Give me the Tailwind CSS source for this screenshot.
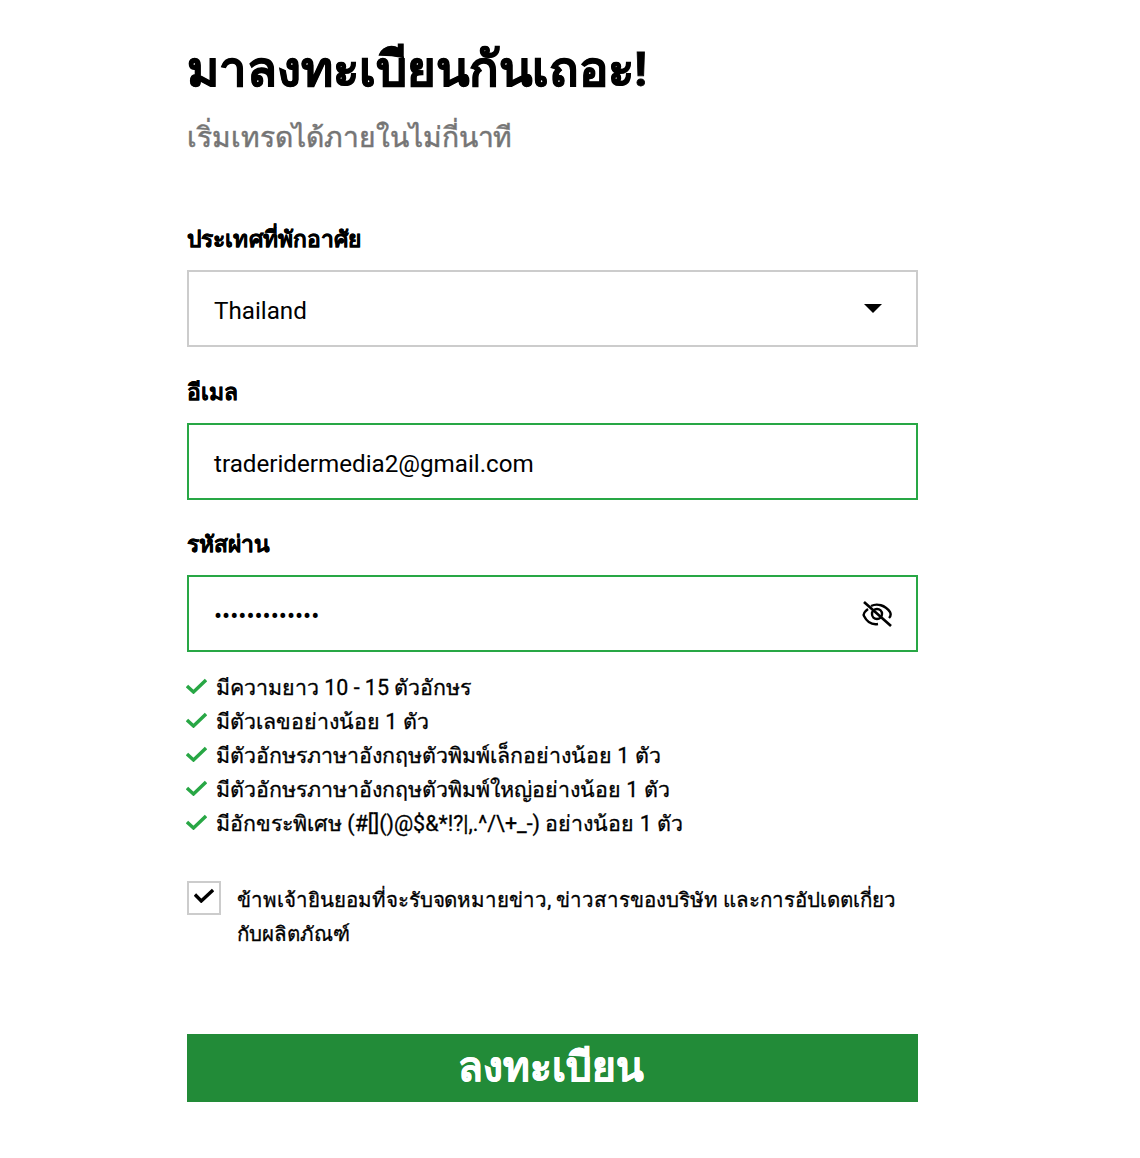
<!DOCTYPE html>
<html lang="th">
<head>
   <meta charset="UTF-8">
   <title>Register</title>
   <script src="https://cdn.jsdelivr.net/npm/@tailwindcss/browser@4"></script>
</head>
<body class="bg-white font-['Roboto','Noto_Sans','Noto_Sans_CJK_SC',sans-serif] text-black">
   <div class="w-[731px] ml-[187px] pt-[38px]">
      <h1 class="text-[49px] leading-[64px] font-bold [-webkit-text-stroke:0.8px_black]">มาลงทะเบียนกันเถอะ!</h1>
      <p class="text-[28.2px] leading-[40px] mt-[16px] tracking-[-0.08px] text-[#757575] [-webkit-text-stroke:0.5px_#757575]">เริ่มเทรดได้ภายในไม่กี่นาที</p>

      <label class="block mt-[66px] text-[22.8px] leading-[32px] tracking-[0.12px] font-bold [-webkit-text-stroke:0.3px_black]">ประเทศที่พักอาศัย</label>
      <div class="mt-[14px] h-[77px] border-2 border-[#cccccc] flex items-center justify-between pl-[25px] pr-[34px]">
         <span class="text-[24.2px] pt-[5px]">Thailand</span>
         <span class="w-0 h-0 border-x-[9px] border-x-transparent border-t-[9px] border-t-black mb-[1px]"></span>
      </div>

      <label class="block mt-[30px] text-[22.8px] leading-[32px] font-bold [-webkit-text-stroke:0.3px_black]">อีเมล</label>
      <div class="mt-[14px] h-[77px] border-2 border-[#28a745] flex items-center pl-[25px]">
         <span class="text-[24.2px] pt-[5px]">traderidermedia2@gmail.com</span>
      </div>

      <label class="block mt-[29px] text-[22.8px] leading-[32px] font-bold [-webkit-text-stroke:0.3px_black]">รหัสผ่าน</label>
      <div class="mt-[14px] h-[77px] border-2 border-[#28a745] flex items-center justify-between pl-[25px] pr-[23px]">
         <span class="text-[24px] pt-[4px]">•••••••••••••</span>
         <svg class="w-[32px] h-[28px]" viewBox="0 0 32 28" fill="none" stroke="black" stroke-width="2.4">
            <path d="M7 9 C3 12 2 14 3 16 C6 22 11 25 17 24" />
            <path d="M10 6 C16 3 24 5 29 12 C30 14 30 16 28 18" />
            <circle cx="16" cy="14" r="5" />
            <path d="M3 2 L30 26" stroke-width="2.6" />
         </svg>
      </div>

      <ul class="mt-[19px] -ml-[1px] text-[21.4px] leading-[34px] [-webkit-text-stroke:0.3px_black]">
         <li class="flex items-center gap-[9px]"><svg class="w-[21px] h-[16px] mb-[5px]" viewBox="0 0 21 16" fill="none" stroke="#28a745" stroke-width="3.4"><path d="M1 8 L7.5 14 L20 2"/></svg>มีความยาว 10 - 15 ตัวอักษร</li>
         <li class="flex items-center gap-[9px]"><svg class="w-[21px] h-[16px] mb-[5px]" viewBox="0 0 21 16" fill="none" stroke="#28a745" stroke-width="3.4"><path d="M1 8 L7.5 14 L20 2"/></svg>มีตัวเลขอย่างน้อย 1 ตัว</li>
         <li class="flex items-center gap-[9px]"><svg class="w-[21px] h-[16px] mb-[5px]" viewBox="0 0 21 16" fill="none" stroke="#28a745" stroke-width="3.4"><path d="M1 8 L7.5 14 L20 2"/></svg>มีตัวอักษรภาษาอังกฤษตัวพิมพ์เล็กอย่างน้อย 1 ตัว</li>
         <li class="flex items-center gap-[9px]"><svg class="w-[21px] h-[16px] mb-[5px]" viewBox="0 0 21 16" fill="none" stroke="#28a745" stroke-width="3.4"><path d="M1 8 L7.5 14 L20 2"/></svg>มีตัวอักษรภาษาอังกฤษตัวพิมพ์ใหญ่อย่างน้อย 1 ตัว</li>
         <li class="flex items-center gap-[9px]"><svg class="w-[21px] h-[16px] mb-[5px]" viewBox="0 0 21 16" fill="none" stroke="#28a745" stroke-width="3.4"><path d="M1 8 L7.5 14 L20 2"/></svg>มีอักขระพิเศษ (#[]()@$&amp;*!?|,.^/\+_-) อย่างน้อย 1 ตัว</li>
      </ul>

      <div class="mt-[40px] flex gap-[16px]">
         <div class="w-[34px] h-[34px] shrink-0 border-2 border-[#cccccc] flex items-center justify-center">
            <svg class="w-[20px] h-[15px] mb-[6px]" viewBox="0 0 22 16" fill="none" stroke="black" stroke-width="3.8"><path d="M1 7 L8 14 L21 2"/></svg>
         </div>
         <p class="mt-[2px] text-[20.5px] leading-[34px] tracking-[-0.03px] [-webkit-text-stroke:0.3px_black]">ข้าพเจ้ายินยอมที่จะรับจดหมายข่าว, ข่าวสารของบริษัท และการอัปเดตเกี่ยว<br>กับผลิตภัณฑ์</p>
      </div>

      <button class="mt-[83px] w-full h-[68px] pr-[4px] pb-[2px] bg-[#228b38] text-white text-[40.5px] font-bold flex items-center justify-center [-webkit-text-stroke:0.6px_white]">ลงทะเบียน</button>
   </div>
</body>
</html>
